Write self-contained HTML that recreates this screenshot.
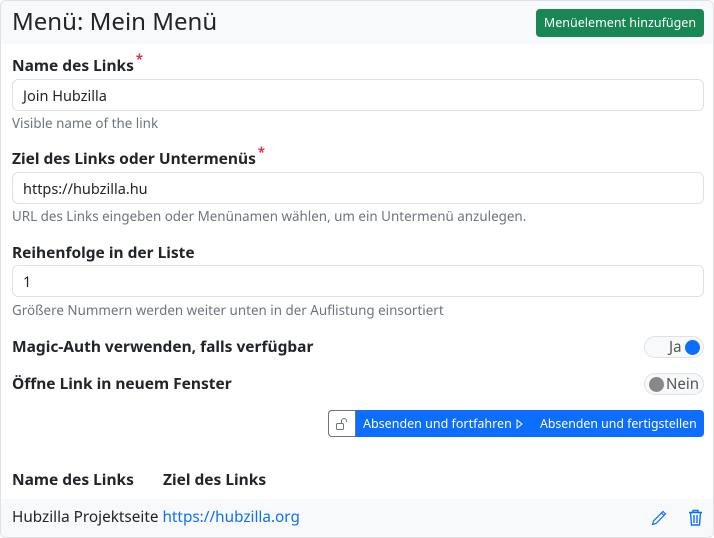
<!DOCTYPE html>
<html><head><meta charset="utf-8"><style>
*{box-sizing:border-box;margin:0;padding:0}
body{width:714px;height:538px;background:#fff;font-family:"Noto Sans","Open Sans","DejaVu Sans","Liberation Sans",sans-serif;color:#212529;position:relative;overflow:hidden}
.card{position:absolute;left:0;top:0;width:714px;height:538px;border:1px solid #dee2e6;border-radius:6px;overflow:hidden}
.hdr{position:absolute;left:0;top:0;width:712px;height:43px;background:#f8f9fa}
.a{position:absolute;white-space:nowrap}
.lbl{font-weight:bold;font-size:15.5px;left:11px}
.req{color:#dc3545;font-size:13px;vertical-align:top;position:relative;top:-4px;margin-left:2px}
.inp{left:11px;width:692px;height:32px;border:1px solid #dee2e6;border-radius:6px;font-size:14.5px;padding:6px 10px}
.help{left:11px;font-size:13.4px;color:#6c757d}
.tg{left:643px;width:60px;height:22px;border:1px solid #dee2e6;border-radius:11px;background:#f8f9fa;font-size:15px;color:#555}
</style></head><body>
<div class="card">
<div class="hdr"></div>
<div class="a" style="left:11px;top:4px;font-size:24px">Menü: Mein Menü</div>
<div class="a" style="left:535px;top:8px;width:168px;height:28px;background:#198754;border-radius:4px;color:#fff;font-size:12.5px;text-align:center;line-height:27px">Menüelement hinzufügen</div>

<div class="a lbl" style="top:53px">Name des Links<span class="req">*</span></div>
<div class="a inp" style="top:78px">Join Hubzilla</div>
<div class="a help" style="top:113px">Visible name of the link</div>

<div class="a lbl" style="top:146px">Ziel des Links oder Untermenüs<span class="req">*</span></div>
<div class="a inp" style="top:171px">https://hubzilla.hu</div>
<div class="a help" style="top:206px">URL des Links eingeben oder Menünamen wählen, um ein Untermenü anzulegen.</div>

<div class="a lbl" style="top:240px">Reihenfolge in der Liste</div>
<div class="a inp" style="top:264px">1</div>
<div class="a help" style="top:300px">Größere Nummern werden weiter unten in der Auflistung einsortiert</div>

<div class="a lbl" style="top:334px">Magic-Auth verwenden, falls verfügbar</div>
<div class="a tg" style="top:335px"><span style="position:absolute;left:24px;top:0px">Ja</span><span style="position:absolute;right:3px;top:3px;width:15px;height:15px;border-radius:50%;background:#0d6efd"></span></div>
<div class="a lbl" style="top:371px">Öffne Link in neuem Fenster</div>
<div class="a tg" style="top:372px"><span style="position:absolute;left:4px;top:3px;width:15px;height:15px;border-radius:50%;background:#888"></span><span style="position:absolute;left:21px;top:0px">Nein</span></div>

<div class="a" style="left:327px;top:409px;width:376px;height:27px;border-radius:4px;background:#0d6efd;overflow:hidden">
<div style="position:absolute;left:0;top:0;width:28px;height:27px;background:#fff;border:1px solid #6c757d;border-radius:4px 0 0 4px">
<svg width="14" height="14" viewBox="0 0 14 14" style="position:absolute;left:6px;top:6px" fill="none" stroke="#6c757d" stroke-width="1"><rect x="1.5" y="6.5" width="7" height="6" rx="1"/><path d="M6.5 6.5V4a2.5 2.5 0 0 1 5 0v1"/></svg></div>
<div style="position:absolute;left:35px;top:5px;color:#fff;font-size:12.5px">Absenden und fortfahren</div>
<svg width="8" height="10" style="position:absolute;left:188px;top:9px" fill="none" stroke="#fff"><path d="M1 1L6 5 1 9Z"/></svg>
<div style="position:absolute;left:212px;top:5px;color:#fff;font-size:12.3px">Absenden und fertigstellen</div>
</div>

<div class="a lbl" style="top:467px">Name des Links</div>
<div class="a lbl" style="left:162px;top:467px">Ziel des Links</div>
<div class="a" style="left:0;top:498px;width:712px;height:39px;background:#f8f9fa"></div>
<div class="a" style="left:11px;top:506px;font-size:15.3px">Hubzilla Projektseite <span style="color:#0d6efd">https://hubzilla.org</span></div>
<svg class="a" style="left:650px;top:509px" width="16" height="16" viewBox="0 0 16 16" fill="none" stroke="#0d6efd" stroke-width="1.2"><path d="M12 1.5l2.5 2.5L5 13.5 1.5 14.5 2.5 11z M10.5 3l2.5 2.5"/></svg>
<svg class="a" style="left:687px;top:508px" width="15" height="17" viewBox="0 0 15 17" fill="none" stroke="#0d6efd" stroke-width="1.4"><path d="M1 3.5h13M5 3.5V1.5h5v2M2.5 3.5l1 12.5h8l1-12.5M6 6v8M9 6v8"/></svg>
</div>
</body></html>
